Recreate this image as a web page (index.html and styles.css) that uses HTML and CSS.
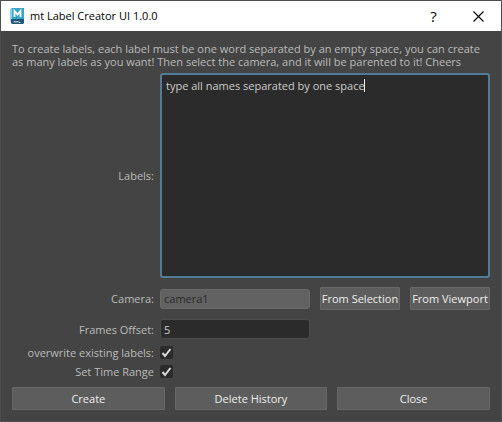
FILE: index.html
```html
<!DOCTYPE html>
<html lang="en">
<head>
<meta charset="utf-8">
<title>mt Label Creator UI 1.0.0</title>
<link rel="stylesheet" href="styles.css">
</head>
<body>
<main class="window">
  <header class="titlebar">
    <svg class="app-icon" width="16" height="16" viewBox="0 0 16 16" aria-hidden="true">
      <path d="M2 0h13v11H2z" fill="#36a5cc"/>
      <path d="M1 1l2-1v11l-2 3z" fill="#8fd3e6"/>
      <path d="M2 11h13v4l-1 1H3l-1-1z" fill="#1f5878"/>
      <path d="M5.500 9V3l3 3.500 3-3.500v6" fill="none" stroke="#fff" stroke-width="1.800"/>
      <path d="M5 14.500v-1h1.500v1m1 0v-1H9v1m1-1v1h1.500" fill="none" stroke="#b5cfdc"/>
    </svg>
    <h1 class="title">mt Label Creator UI 1.0.0</h1>
    <button class="caption-button help" type="button" aria-label="Help">?</button>
    <button class="caption-button" type="button" aria-label="Close window">
      <svg width="11" height="11" viewBox="0 0 11 11" aria-hidden="true"><path d="M.5.5l10 10M10.500.5l-10 10" stroke="#000" stroke-width="1.100"/></svg>
    </button>
  </header>
  <form class="content">
    <p class="intro">To create labels, each label must be one word separated by an empty space, you can create as many labels as you want! Then select the camera, and it will be parented to it! Cheers</p>
    <div class="row row-labels">
      <label class="label" for="labels">Labels:</label>
      <div class="editor">
        <textarea class="names" id="labels">type all names separated by one space</textarea>
        <span class="caret"></span>
      </div>
    </div>
    <div class="row row-camera">
      <label class="label" for="camera">Camera:</label>
      <div class="camera">
        <input class="field" id="camera" type="text" value="camera1" disabled>
        <button class="button pick" type="button">From Selection</button>
        <button class="button pick" type="button">From Viewport</button>
      </div>
    </div>
    <div class="row row-offset">
      <label class="label" for="offset">Frames Offset:</label>
      <input class="field" id="offset" type="text" value="5">
    </div>
    <div class="row row-check">
      <label class="label" for="overwrite">overwrite existing labels:</label>
      <span class="tick"><input class="check" id="overwrite" type="checkbox" checked><svg class="mark" viewBox="0 0 13 13" aria-hidden="true"><path d="M2.500 7l2.500 3L10.500 3"/></svg></span>
    </div>
    <div class="row row-check">
      <label class="label" for="range">Set Time Range</label>
      <span class="tick"><input class="check" id="range" type="checkbox" checked><svg class="mark" viewBox="0 0 13 13" aria-hidden="true"><path d="M2.500 7l2.500 3L10.500 3"/></svg></span>
    </div>
    <div class="actions">
      <button class="button" type="button">Create</button>
      <button class="button" type="button">Delete History</button>
      <button class="button" type="button">Close</button>
    </div>
  </form>
</main>
</body>
</html>
```
FILE: styles.css
```css
* {
  box-sizing: border-box;
}

body {
  margin: 0;
  background: #444;
  color: #bbb;
  font: 11px/13px "Open Sans", "Noto Sans", sans-serif;
}

.window {
  display: flex;
  flex-direction: column;
  min-height: 100vh;
  border: 1px solid #4f4f4f;
}

.titlebar {
  display: flex;
  align-items: center;
  height: 30px;
  padding-left: 8px;
  background: #fff;
  color: #000;
}

.title {
  flex: 1;
  margin: 0 0 0 5px;
  font: 11px/16px "Open Sans", sans-serif;
}

.caption-button {
  display: flex;
  align-items: center;
  justify-content: center;
  width: 45px;
  height: 30px;
  padding: 0;
  border: 0;
  background: none;
  color: #000;
}

.help {
  font: 15px/16px "Open Sans", sans-serif;
}

.content {
  display: flex;
  flex: 1;
  flex-direction: column;
  padding: 11px;
}

.intro {
  margin: 0 0 5px;
}

.row {
  display: grid;
  grid-template-columns: 142px 1fr;
  column-gap: 6px;
  align-items: center;
}

.label {
  text-align: right;
  white-space: nowrap;
}

.row-labels {
  flex: 1;
  margin-bottom: 9px;
}

.editor {
  position: relative;
  display: flex;
  height: 100%;
  min-height: 200px;
}

.names {
  flex: 1;
  min-width: 0;
  padding: 3px 4px;
  border: 2px solid #527b98;
  border-radius: 3px;
  outline: 0;
  background: #2b2b2b;
  color: #ccc;
  font: inherit;
  line-height: 16px;
  resize: none;
}

.caret {
  position: absolute;
  top: 6px;
  left: 204px;
  width: 1px;
  height: 13px;
  background: #eee;
}

.row-camera {
  margin-bottom: 9px;
}

.camera {
  display: flex;
  gap: 10px;
  align-items: center;
}

.field {
  width: 150px;
  height: 20px;
  padding: 0 3px;
  border: 1px solid #4c4c4c;
  border-radius: 3px;
  background: #2b2b2b;
  color: #ccc;
  font: inherit;
}

.field:disabled {
  flex: 1;
  min-width: 0;
  border-color: #6a6a6a;
  background: #626262;
  color: #2b2b2b;
}

.button {
  height: 23px;
  padding: 0;
  border: 1px solid #676767;
  border-radius: 1px;
  background: #5d5d5d;
  color: #eee;
  font: inherit;
  white-space: nowrap;
}

.pick {
  width: 80px;
}

.row-offset {
  margin-bottom: 7px;
}

.row-check {
  height: 13px;
  margin-bottom: 6px;
}

.tick {
  position: relative;
  width: 13px;
  height: 13px;
}

.check {
  display: block;
  width: 13px;
  height: 13px;
  margin: 0;
  border-radius: 2px;
  background: #2b2b2b;
  appearance: none;
}

.mark {
  position: absolute;
  inset: 0;
  fill: none;
  stroke: #ddd;
  stroke-width: 2;
  pointer-events: none;
  visibility: hidden;
}

.check:checked + .mark {
  visibility: visible;
}

.actions {
  display: grid;
  grid-template-columns: repeat(3, 1fr);
  gap: 10px;
  margin-top: 3px;
}
```
